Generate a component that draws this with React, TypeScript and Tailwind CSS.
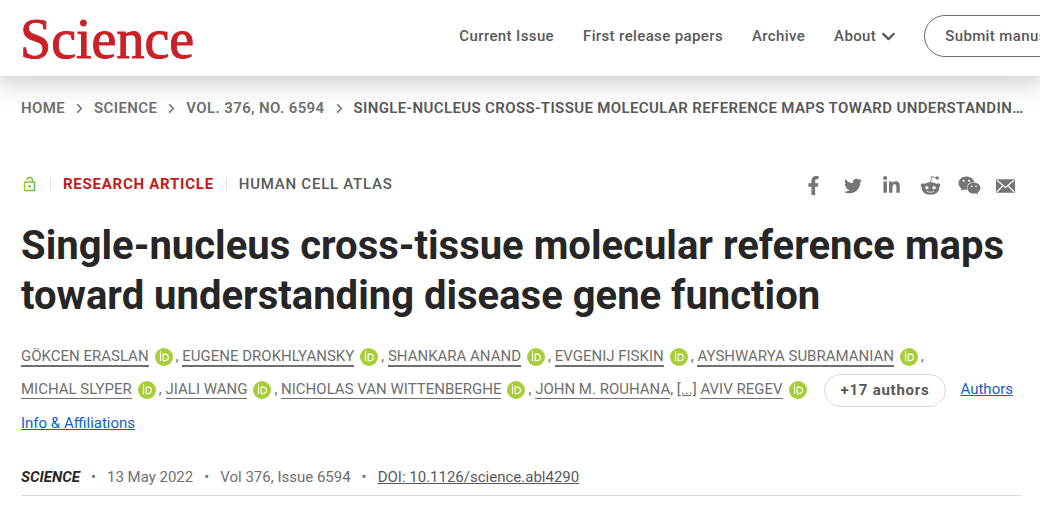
import { Fragment } from 'react';
import { FaFacebookF, FaLinkedinIn, FaRedditAlien, FaTwitter, FaWeixin } from 'react-icons/fa';
import { ChevronDown, ChevronRight } from 'lucide-react';

const NAV = ['Current Issue', 'First release papers', 'Archive'];

const CRUMBS = ['Home', 'Science', 'Vol. 376, No. 6594'];

interface Author {
  name: string;
  orcid: boolean;
  lead?: boolean;
}

const AUTHORS: Author[] = [
  { name: 'Gökcen Eraslan', orcid: true, lead: true },
  { name: 'Eugene Drokhlyansky', orcid: true, lead: true },
  { name: 'Shankara Anand', orcid: true, lead: true },
  { name: 'Evgenij Fiskin', orcid: true, lead: true },
  { name: 'Ayshwarya Subramanian', orcid: true, lead: true },
  { name: 'Michal Slyper', orcid: true },
  { name: 'Jiali Wang', orcid: true },
  { name: 'Nicholas Van Wittenberghe', orcid: true },
  { name: 'John M. Rouhana', orcid: false },
];

const SHARE = [
  { label: 'Facebook', icon: <FaFacebookF size={19} /> },
  { label: 'Twitter', icon: <FaTwitter size={18} /> },
  { label: 'LinkedIn', icon: <FaLinkedinIn size={19} /> },
  { label: 'Reddit', icon: <FaRedditAlien size={21} /> },
  { label: 'WeChat', icon: <FaWeixin size={23} /> },
  { label: 'Email', icon: <EnvelopeIcon /> },
];

function EnvelopeIcon() {
  return (
    <svg width="19" height="14" viewBox="0 0 20 14" fill="none" aria-hidden="true">
      <rect width="20" height="14" rx="1" fill="currentColor" />
      <path d="M1 1l9 7.6L19 1M1 13l6.4-6.4M19 13l-6.4-6.4" stroke="#fff" strokeWidth="1.3" />
    </svg>
  );
}

function OpenLockIcon() {
  return (
    <svg width="13" height="16" viewBox="0 0 13 16" fill="none" stroke="url(#lock)" strokeWidth="1.5">
      <defs>
        <linearGradient id="lock" x1="0" y1="0" x2="13" y2="0" gradientUnits="userSpaceOnUse">
          <stop offset="0" stopColor="#b4c800" />
          <stop offset="1" stopColor="#5cb85c" />
        </linearGradient>
      </defs>
      <rect x="1.5" y="6" width="10" height="8.5" rx="0.5" />
      <path d="M3.8 3.8C4.1 2.2 5.2 1.5 6.6 1.5c1.7 0 2.9 1 2.9 2.8V6" />
      <circle cx="6.5" cy="10.2" r="1.3" fill="#6cbb45" stroke="none" />
    </svg>
  );
}

function OrcidIcon() {
  return (
    <svg className="inline-block align-[-5px]" width="18" height="18" viewBox="0 0 256 256" aria-label="ORCID">
      <circle cx="128" cy="128" r="128" fill="#a6ce39" />
      <g fill="none" stroke="#fff" strokeWidth="17">
        <path d="M78.600 79v107.500M116.500 86.500h28c31 0 46 20 46 46.500 0 24-16 46-46 46h-28z" />
      </g>
      <circle cx="78.600" cy="56.800" r="11" fill="#fff" />
    </svg>
  );
}

function AuthorLink({ name, lead }: { name: string; lead?: boolean }) {
  return (
    <a href="#authors" className={`uppercase whitespace-nowrap border-[#6f6f6f] ${lead ? 'border-b-2' : 'border-b'}`}>
      {name}
    </a>
  );
}

function Header() {
  return (
    <header className="relative z-10 h-[76px] pl-5 flex items-start justify-between bg-white shadow-[0_2px_26px_4px_rgba(0,0,0,0.21)]">
      <a
        href="#home"
        className="shrink-0 font-['Liberation_Serif',serif] text-[56px] leading-[78px] text-[#c92127] [-webkit-text-stroke:1px]"
      >
        Science
      </a>
      <nav className="-mr-[60px] shrink-0 flex items-center gap-[29px] h-[72px] text-[15px] font-medium tracking-wide whitespace-nowrap text-[#595959]">
        {NAV.map((item) => (
          <a key={item} href="#nav">{item}</a>
        ))}
        <button type="button" className="flex items-center gap-0.5">
          About
          <ChevronDown size={21} strokeWidth={2.5} />
        </button>
        <a href="#submit" className="-ml-1 h-[42px] px-5 flex items-center rounded-full border border-[#6f6f6f]">
          Submit manuscript
        </a>
      </nav>
    </header>
  );
}

export default function App() {
  return (
    <div className="overflow-hidden bg-white font-[Roboto,sans-serif] text-[15px] leading-5 text-[#6f6f6f]">
      <Header />

      <main className="pl-[21px] pr-[19px] pb-2">
        <nav aria-label="Breadcrumb" className="mt-[22px] -mr-1 flex items-center gap-[7px] font-semibold tracking-wide uppercase whitespace-nowrap">
          {CRUMBS.map((crumb) => (
            <Fragment key={crumb}>
              <a href="#crumb">{crumb}</a>
              <ChevronRight className="shrink-0" size={15} strokeWidth={2.5} />
            </Fragment>
          ))}
          <span className="min-w-0 truncate text-[#595959]">
            Single-nucleus cross-tissue molecular reference maps toward understanding disease gene function
          </span>
        </nav>

        <div className="mt-14 flex items-start justify-between">
          <div className="h-5 flex items-center gap-3 tracking-wider uppercase">
            <span className="px-[2px]"><OpenLockIcon /></span>
            <span className="h-3 w-px bg-[#d9d9d9]" />
            <span className="font-bold text-[#c71a1a]">Research Article</span>
            <span className="h-3 w-px bg-[#d9d9d9]" />
            <a href="#atlas" className="font-medium text-[#595959]">Human Cell Atlas</a>
          </div>
          <div className="pr-1 flex items-center text-[#757575]">
            {SHARE.map(({ label, icon }) => (
              <a key={label} href="#share" aria-label={label} className="w-[39px] flex justify-center last:w-6 last:ml-1">
                {icon}
              </a>
            ))}
          </div>
        </div>

        <h1 className="mt-6 text-[40px] leading-[50px] font-bold text-[#262626]">
          Single-nucleus cross-tissue molecular reference maps toward understanding disease gene function
        </h1>

        <div className="mt-[19px] leading-[33px]">
          {AUTHORS.map(({ name, orcid, lead }) => (
            <Fragment key={name}>
              <AuthorLink name={name} lead={lead} />
              {orcid && <a href="#orcid" className="mx-[6px] mr-[3px]"><OrcidIcon /></a>}
              {', '}
            </Fragment>
          ))}
          <a href="#more" className="underline">[...]</a>{' '}
          <AuthorLink name="Aviv Regev" />
          <a href="#orcid" className="ml-[6px]"><OrcidIcon /></a>
          <button
            type="button"
            className="ml-[17px] mr-[14px] h-[33px] px-4 align-middle rounded-full border border-[#d9d9d9] text-[15px] leading-[31px] font-bold tracking-wider text-[#595959]"
          >
            +17 authors
          </button>
          <a href="#info" className="text-[#1a5cc8] underline">Authors Info &amp; Affiliations</a>
        </div>

        <div className="mt-[27px] pb-2 flex items-center border-b border-[#d9d9d9]">
          <span className="font-bold italic uppercase text-[#262626]">Science</span>
          <span className="px-[11px]">•</span>
          <span>13 May 2022</span>
          <span className="px-[11px]">•</span>
          <span>Vol 376, Issue 6594</span>
          <span className="px-[11px]">•</span>
          <a href="#doi" className="text-[#595959] underline">DOI: 10.1126/science.abl4290</a>
        </div>
      </main>
    </div>
  );
}
